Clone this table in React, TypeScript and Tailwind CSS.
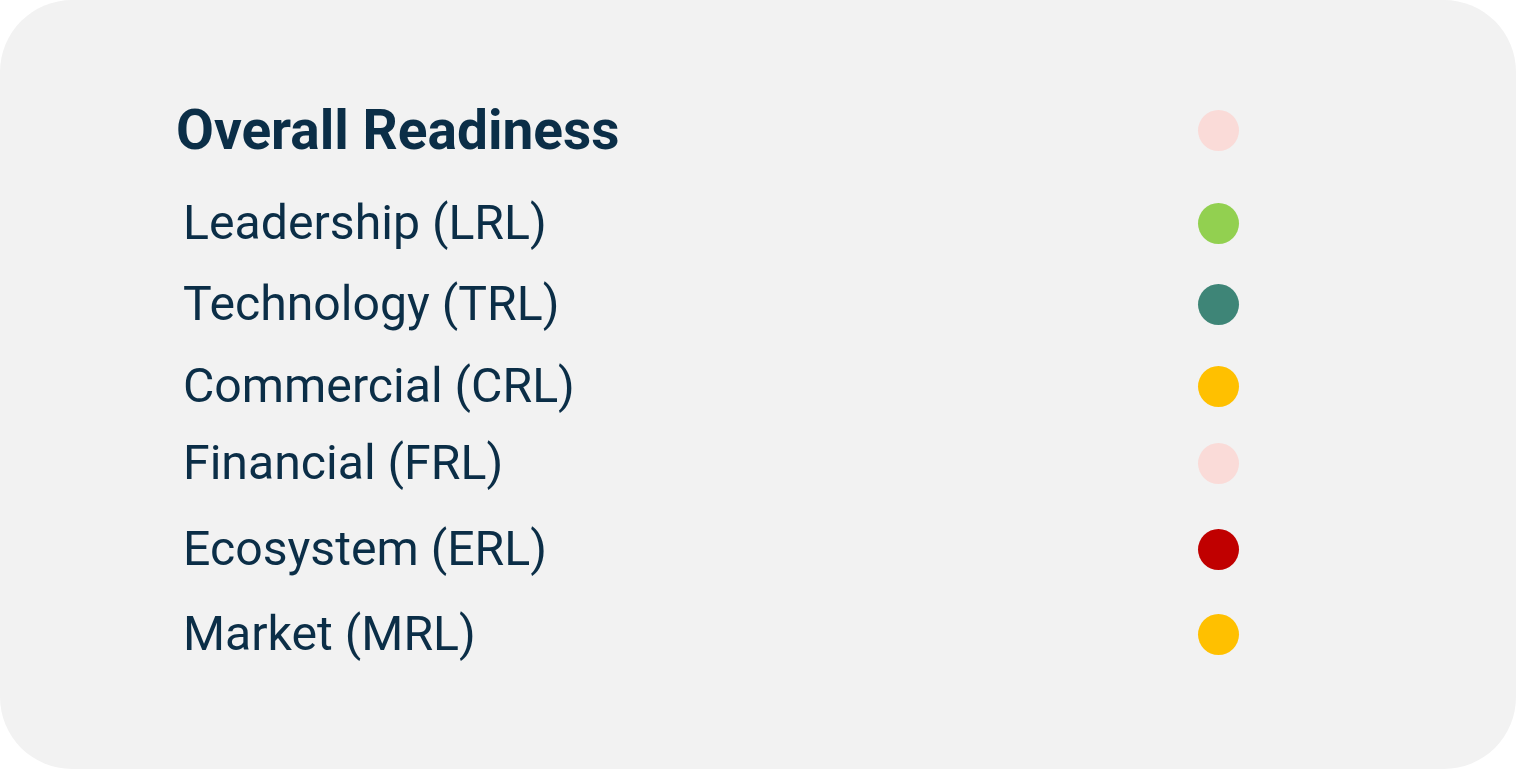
import React from 'react';

const rows = [
  { label: 'Leadership (LRL)', color: 'bg-[#92d050]', mt: 'mt-[33px]' },
  { label: 'Technology (TRL)', color: 'bg-[#3e8577]', mt: 'mt-[21px]' },
  { label: 'Commercial (CRL)', color: 'bg-[#ffc000]', mt: 'mt-[22px]' },
  { label: 'Financial (FRL)', color: 'bg-[#fadbd8]', mt: 'mt-[17px]' },
  { label: 'Ecosystem (ERL)', color: 'bg-[#c00000]', mt: 'mt-[26px]' },
  { label: 'Market (MRL)', color: 'bg-[#ffc000]', mt: 'mt-[25px]' },
];

export default function App() {
  return (
    <div className="w-[1516px] h-[769px] bg-white">
      <div
        className="w-full h-full rounded-[72px] bg-[#f2f2f2] pt-[100px] pl-[176px] text-[#0b2e47]"
        style={{ fontFamily: 'Roboto, sans-serif' }}
      >
        <div className="flex items-center h-[60px] w-[1063px] justify-between">
          <h1 className="text-[55px] font-bold leading-none">Overall Readiness</h1>
          <span className="w-[41px] h-[41px] rounded-full bg-[#fadbd8]" />
        </div>
        {rows.map((row) => (
          <div key={row.label} className={`flex items-center h-[60px] w-[1063px] justify-between ${row.mt}`}>
            <span className="pl-[7px] text-[48.2px] leading-none">{row.label}</span>
            <span className={`w-[41px] h-[41px] rounded-full ${row.color}`} />
          </div>
        ))}
      </div>
    </div>
  );
}
